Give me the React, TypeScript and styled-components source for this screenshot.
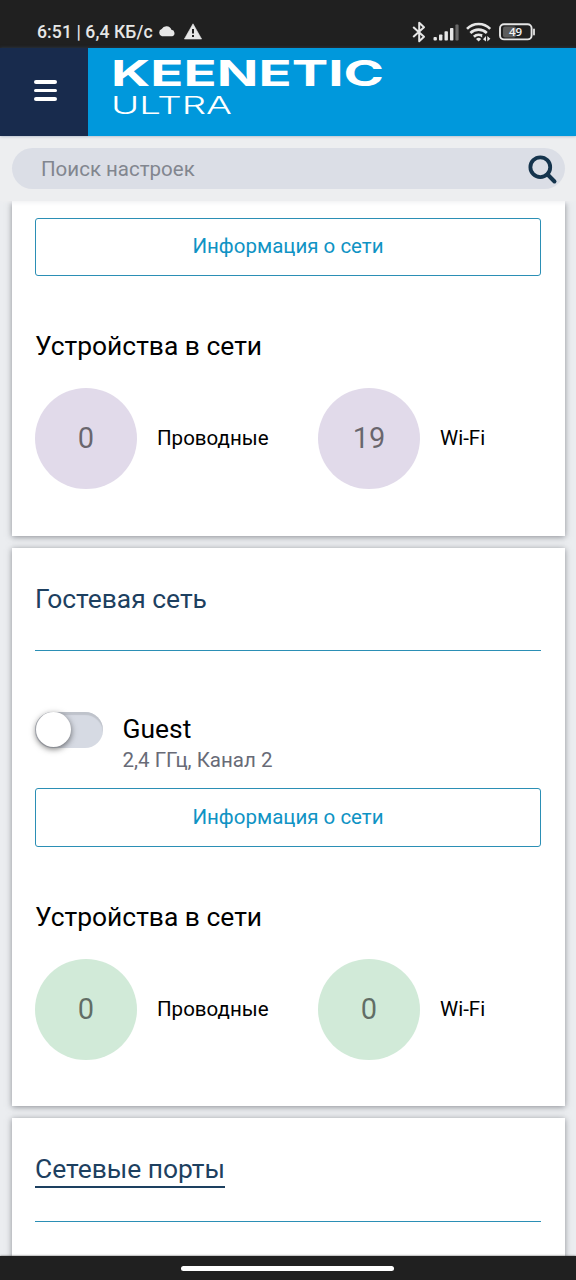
import React from "react";
import styled, { createGlobalStyle } from "styled-components";

const GlobalStyle = createGlobalStyle`
  *, *::before, *::after { box-sizing: border-box; }
  body { margin: 0; background: #ebedf0; font-family: Roboto, "Noto Sans", sans-serif; }
  h2, h3, p { margin: 0; font-weight: 400; }
  button { font: inherit; }
`;

const Screen = styled.div`
  width: 576px;
  height: 1280px;
  display: flex;
  flex-direction: column;
  overflow: hidden;
  background: #ebedf0;
`;

const StatusBar = styled.div`
  flex: none;
  height: 48px;
  padding: 15px 40px 0 37px;
  display: flex;
  justify-content: space-between;
  background: #202020;
  color: #e6e6e6;
`;

const StatusGroup = styled.div<{ $gap: number }>`
  display: flex;
  align-items: center;
  height: 34px;
  gap: ${(p) => p.$gap}px;
`;

const StatusText = styled.span`
  width: 116px;
  font-size: 17.6px;
  font-weight: 500;
  letter-spacing: 0.08px;
  line-height: 34px;
  white-space: nowrap;
`;

const WarningSlot = styled.span`
  display: flex;
  padding: 0 0 2px 3px;
`;

const CloudSlot = styled.span`
  display: flex;
  padding-bottom: 2px;
`;

const Header = styled.header`
  flex: none;
  height: 88px;
  display: flex;
  background: #0098dc;
  position: relative;
  z-index: 2;
  box-shadow: 0 0 3px rgba(60, 90, 130, 0.5);
`;

const MenuButton = styled.button`
  width: 88px;
  height: 88px;
  border: 0;
  padding: 0 0 3px 3px;
  display: flex;
  flex-direction: column;
  align-items: center;
  justify-content: center;
  gap: 5px;
  background: #182b4d;
`;

const MenuLine = styled.span`
  width: 23px;
  height: 3.5px;
  border-radius: 2px;
  background: #fff;
`;

const Brand = styled.svg`
  margin-left: 24px;
  display: block;
`;

const SearchArea = styled.div`
  flex: none;
  height: 65px;
  padding: 12px 11px 0 12px;
  position: relative;
  z-index: 1;
  background: #edeef0;
  box-shadow: 0 1px 5px #edeef0;
`;

const SearchField = styled.div`
  height: 41px;
  padding: 0 6px 0 29px;
  border-radius: 21px;
  display: flex;
  align-items: center;
  justify-content: space-between;
  background: #dbdee6;
  color: #82868f;
  font-size: 20.5px;
`;

const Content = styled.main`
  flex: 1;
  min-height: 0;
  overflow: hidden;
  padding: 0 11px 0 12px;
  display: flex;
  flex-direction: column;
  gap: 12px;
`;

const Card = styled.section<{ $height: number }>`
  flex: none;
  height: ${(p) => p.$height}px;
  padding: 0 24px 0 23px;
  background: #fff;
  box-shadow: 0 1px 6px rgba(60, 64, 72, 0.55);
`;

const CardTitle = styled.div<{ $tall?: boolean }>`
  height: ${(p) => (p.$tall ? 104 : 103)}px;
  padding-top: 36px;
  border-bottom: 1px solid #2b8fb5;
  color: #1d4060;
  font-size: 26.4px;
  line-height: 31px;
`;

const TitleLink = styled.span`
  display: inline-block;
  height: 34px;
  border-bottom: 2px solid #1d4060;
`;

const NetworkRow = styled.div`
  display: flex;
  align-items: flex-start;
  height: 137px;
  padding-top: 61px;
  gap: 19.5px;
`;

const NetworkText = styled.div`
  padding-top: 1px;
`;

const Toggle = styled.div`
  width: 68px;
  height: 36px;
  border-radius: 18px;
  background: #d6dae3;
  box-shadow: inset 0 3px 1px #bfc3cb;
`;

const Knob = styled.div`
  width: 35px;
  height: 35px;
  margin: 0 0.5px;
  border-radius: 50%;
  background: #fff;
  box-shadow: 0 2px 6px rgba(0, 0, 0, 0.55);
`;

const NetworkName = styled.p`
  font-size: 26.4px;
  line-height: 32px;
  color: #000;
`;

const NetworkInfo = styled.p`
  font-size: 20.5px;
  line-height: 30px;
  color: #686b77;
`;

const InfoButton = styled.button<{ $height: number }>`
  display: block;
  width: 506px;
  height: ${(p) => p.$height}px;
  padding: 0 0 2px;
  border: 1px solid #2b8fb5;
  border-radius: 3px;
  background: #fff;
  color: #0f93c4;
  font-size: 20.5px;
`;

const DevicesTitle = styled.h3`
  margin-top: 54px;
  height: 58px;
  font-size: 26.4px;
  line-height: 32px;
  color: #000;
`;

const DeviceGrid = styled.div`
  display: grid;
  grid-template-columns: 283px 1fr;
`;

const Device = styled.div`
  display: flex;
  align-items: center;
  gap: 20px;
  font-size: 20.5px;
  color: #000;
`;

const DeviceLabel = styled.span`
  padding-bottom: 2px;
`;

const Count = styled.div<{ $color: string }>`
  width: 102px;
  height: 101px;
  border-radius: 50%;
  display: flex;
  align-items: center;
  justify-content: center;
  padding-bottom: 2px;
  background: ${(p) => p.$color};
  color: rgba(0, 0, 0, 0.54);
  font-size: 29px;
`;

const Spacer = styled.div`
  height: 17px;
`;

const NavBar = styled.div`
  flex: none;
  height: 24px;
  display: flex;
  justify-content: center;
  padding: 10px 2px 0 0;
  background: #202020;
  box-shadow: 0 0 2px #555;
  position: relative;
`;

const HomeHandle = styled.div`
  width: 213px;
  height: 5px;
  border-radius: 3px;
  background: #fff;
`;

const CloudIcon = () => (
  <svg width="18" height="12" viewBox="0 0 18 12">
    <path d="M4 11.2a3.7 3.7 0 0 1-.3-7.1A5.3 5.3 0 0 1 13.4 4.8 3.3 3.3 0 0 1 14.3 11.2Z" fill="#e6e6e6" />
  </svg>
);

const WarningIcon = () => (
  <svg width="18" height="17" viewBox="0 0 18 17">
    <path d="M9 .8 17.6 16H.4Z" fill="#e6e6e6" stroke="#e6e6e6" strokeWidth=".6" strokeLinejoin="round" />
    <path d="M9 6v4.6M9 12v2" stroke="#202020" strokeWidth="2" />
  </svg>
);

const BluetoothIcon = () => (
  <svg width="14" height="22" viewBox="0 0 14 22">
    <path d="M1.2 6 12 15.8 7.2 20.3V1.7L12 6.2 1.2 16" fill="none" stroke="#e6e6e6" strokeWidth="2" strokeLinejoin="round" />
  </svg>
);

const SignalIcon = () => (
  <svg width="26" height="17" viewBox="0 0 26 17">
    <g fill="#e6e6e6">
      <rect x="0.5" y="13" width="3.4" height="3.6" rx="1" />
      <rect x="6" y="10.5" width="3.4" height="6.1" rx=".8" />
      <rect x="11.5" y="7.3" width="3.4" height="9.3" rx=".8" />
      <rect x="17" y="4" width="3.4" height="12.6" rx=".8" />
    </g>
    <rect x="22.4" y="0.6" width="3.2" height="16" rx=".8" fill="#686868" />
  </svg>
);

const WifiIcon = () => (
  <svg width="26" height="20" viewBox="0 0 26 20">
    <g fill="none" stroke="#e6e6e6" strokeWidth="2.6">
      <path d="M1 6.9a16.2 16.2 0 0 1 23.2 0" />
      <path d="M4.4 11a11.7 11.7 0 0 1 16.4 0" />
      <path d="M7.9 14.7a6.7 6.7 0 0 1 9.4 0" />
    </g>
    <path d="M10 17a3.8 3.8 0 0 1 5.2 0L12.6 19.6Z" fill="#e6e6e6" />
    <rect x="16.2" y="13" width="10" height="7" fill="#202020" />
    <path d="M17 17.2 20 14v5.5ZM24.4 16.8 21.3 14v5.5Z" fill="#e6e6e6" />
  </svg>
);

const BatteryIcon = () => (
  <svg width="37" height="18" viewBox="0 0 37 18">
    <rect x="4" y="3.5" width="13" height="11" rx="2" fill="#5c5c5c" />
    <rect x="1" y="1.2" width="31.6" height="15.2" rx="4" fill="none" stroke="#e6e6e6" strokeWidth="1.9" />
    <path d="M35 6.5v5" stroke="#e6e6e6" strokeWidth="1.8" strokeLinecap="round" />
    <text x="16.6" y="13" fill="#f2f2f2" fontFamily="Open Sans, sans-serif" fontSize="11.5" fontWeight="600" textAnchor="middle">49</text>
  </svg>
);

const SearchIcon = () => (
  <svg width="32" height="32" viewBox="0 0 32 32">
    <circle cx="13.3" cy="14.2" r="9.9" fill="none" stroke="#15344d" strokeWidth="3.8" />
    <path d="m20.6 21.5 6.9 7" stroke="#15344d" strokeWidth="4" strokeLinecap="round" />
  </svg>
);

const Devices = ({ color, wired, wifi }: { color: string; wired: number; wifi: number }) => (
  <>
    <DevicesTitle>Устройства в сети</DevicesTitle>
    <DeviceGrid>
      <Device>
        <Count $color={color}>{wired}</Count>
        <DeviceLabel>Проводные</DeviceLabel>
      </Device>
      <Device>
        <Count $color={color}>{wifi}</Count>
        <DeviceLabel>Wi-Fi</DeviceLabel>
      </Device>
    </DeviceGrid>
  </>
);

export default function App() {
  return (
    <>
      <GlobalStyle />
      <Screen>
        <StatusBar>
          <StatusGroup $gap={5}>
            <StatusText>6:51 | 6,4 КБ/с</StatusText>
            <CloudSlot>
              <CloudIcon />
            </CloudSlot>
            <WarningSlot>
              <WarningIcon />
            </WarningSlot>
          </StatusGroup>
          <StatusGroup $gap={7}>
            <BluetoothIcon />
            <SignalIcon />
            <WifiIcon />
            <BatteryIcon />
          </StatusGroup>
        </StatusBar>
        <Header>
          <MenuButton aria-label="Меню">
            <MenuLine />
            <MenuLine />
            <MenuLine />
          </MenuButton>
          <Brand width="280" height="88" viewBox="0 0 280 88" fill="#fff" fontFamily="Inter, sans-serif">
            <text x="-1" y="37.5" fontSize="36" fontWeight="700" textLength="273" lengthAdjust="spacingAndGlyphs">KEENETIC</text>
            <text x="-1" y="66" fontSize="24.5" fontWeight="300" textLength="121" lengthAdjust="spacingAndGlyphs">ULTRA</text>
          </Brand>
        </Header>
        <SearchArea>
          <SearchField>
            <span>Поиск настроек</span>
            <SearchIcon />
          </SearchField>
        </SearchArea>
        <Content>
          <Card $height={335}>
            <Spacer />
            <InfoButton $height={58}>Информация о сети</InfoButton>
            <Devices color="#e1daea" wired={0} wifi={19} />
          </Card>
          <Card $height={558}>
            <CardTitle>Гостевая сеть</CardTitle>
            <NetworkRow>
              <Toggle>
                <Knob />
              </Toggle>
              <NetworkText>
                <NetworkName>Guest</NetworkName>
                <NetworkInfo>2,4 ГГц, Канал 2</NetworkInfo>
              </NetworkText>
            </NetworkRow>
            <InfoButton $height={59}>Информация о сети</InfoButton>
            <Devices color="#d1ead8" wired={0} wifi={0} />
          </Card>
          <Card $height={300}>
            <CardTitle $tall>
              <TitleLink>Сетевые порты</TitleLink>
            </CardTitle>
          </Card>
        </Content>
        <NavBar>
          <HomeHandle />
        </NavBar>
      </Screen>
    </>
  );
}
